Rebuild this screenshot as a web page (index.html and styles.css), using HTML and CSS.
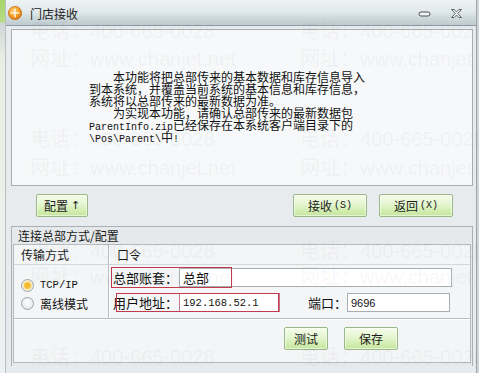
FILE: index.html
```html
<!DOCTYPE html>
<html lang="zh-CN">
<head>
<meta charset="utf-8">
<title>门店接收</title>
<link rel="stylesheet" href="styles.css">
</head>
<body>
<div class="screen">
  <div class="strip-left"></div>
  <div class="window">
    <div class="titlebar">
      <svg class="app-icon" width="16" height="16" viewBox="0 0 16 16">
        <defs>
          <radialGradient id="og" cx="40%" cy="35%" r="65%">
            <stop offset="0" stop-color="#ffd37a"/>
            <stop offset="0.6" stop-color="#f5a02a"/>
            <stop offset="1" stop-color="#d9780e"/>
          </radialGradient>
        </defs>
        <circle cx="8" cy="8" r="6.6" fill="url(#og)" stroke="#c96c10" stroke-width="0.8"/>
        <path d="M8 4.2v7.6M4.2 8h7.6" stroke="#fff4dc" stroke-width="1.6" stroke-linecap="round"/>
      </svg>
      <span class="title">门店接收</span>
      <div class="controls">
        <svg width="13" height="8" viewBox="0 0 13 8"><rect x="1" y="2" width="11" height="4" rx="2" fill="#f4f6f6" stroke="#4a5356" stroke-width="1"/></svg>
        <svg width="13" height="11" viewBox="0 0 13 11"><path d="M1.5 1.5h2.6l2.4 2.4 2.4-2.4h2.6l-3.7 4 3.7 4H8.9L6.5 7.1 4.1 9.5H1.5l3.7-4z" fill="#f4f6f6" stroke="#4a5356" stroke-width="0.9" stroke-linejoin="round"/></svg>
      </div>
    </div>
    <div class="body">
      <div class="info-panel">
        <div class="info-text">
          <div class="line indent">本功能将把总部传来的基本数据和库存信息导入</div>
          <div class="line">到本系统，并覆盖当前系统的基本信息和库存信息，</div>
          <div class="line">系统将以总部传来的最新数据为准。</div>
          <div class="line indent">为实现本功能，请确认总部传来的最新数据包</div>
          <div class="line"><span class="mono">ParentInfo.zip</span>已经保存在本系统客户端目录下的</div>
          <div class="line"><span class="mono">\Pos\Parent\</span>中<span class="mono">!</span></div>
        </div>
      </div>
      <div class="btn-row">
        <button class="btn btn-config">配置<span class="arrow">↑</span></button>
        <div class="spacer"></div>
        <button class="btn btn-wide">接收<span class="key">(S)</span></button>
        <button class="btn btn-wide">返回<span class="key">(X)</span></button>
      </div>
      <div class="group">
        <div class="group-title">连接总部方式/配置</div>
        <div class="group-inner">
          <div class="cfg-top">
            <div class="col-mode">
              <div class="col-head">传输方式</div>
              <div class="radios">
                <div class="radio-row"><span class="radio on"></span><span class="mono-lg">TCP/IP</span></div>
                <div class="radio-row"><span class="radio"></span><span>离线模式</span></div>
              </div>
            </div>
            <div class="col-pass">
              <div class="col-head head-pass">口令</div>
              <div class="fields">
                <div class="field-row">
                  <span class="label">总部账套：</span>
                  <div class="input input-full cjk">总部</div>
                  <span class="mark mark-1"></span>
                </div>
                <div class="field-row">
                  <span class="label">用户地址：</span>
                  <div class="input input-addr mono-in">192.168.52.1</div>
                  <span class="label label-port">端口：</span>
                  <div class="input input-port sans">9696</div>
                  <span class="mark mark-2"></span>
                </div>
              </div>
            </div>
          </div>
          <div class="cfg-actions">
            <button class="btn btn-test">测试</button>
            <button class="btn btn-save">保存</button>
          </div>
        </div>
      </div>
    </div>
  </div>
  <div class="strip-right"></div>
  <div class="watermark">
    <span class="wm" style="left:30px;top:20px">电话：400-665-0028</span>
    <span class="wm" style="left:300px;top:20px">电话：400-665-0028</span>
    <span class="wm" style="left:30px;top:48px">网址：www.chanjet.net</span>
    <span class="wm" style="left:300px;top:48px">网址：www.chanjet.net</span>
    <span class="wm" style="left:30px;top:128px">电话：400-665-0028</span>
    <span class="wm" style="left:300px;top:128px">电话：400-665-0028</span>
    <span class="wm" style="left:30px;top:157px">网址：www.chanjet.net</span>
    <span class="wm" style="left:300px;top:157px">网址：www.chanjet.net</span>
    <span class="wm" style="left:30px;top:240px">电话：400-665-0028</span>
    <span class="wm" style="left:300px;top:240px">电话：400-665-0028</span>
    <span class="wm" style="left:30px;top:266px">网址：www.chanjet.net</span>
    <span class="wm" style="left:300px;top:266px">网址：www.chanjet.net</span>
    <span class="wm" style="left:30px;top:346px">电话：400-665-0028</span>
    <span class="wm" style="left:300px;top:346px">电话：400-665-0028</span>
  </div>
</div>
</body>
</html>
```

FILE: styles.css
```css
* { box-sizing: border-box; }
html, body { margin: 0; padding: 0; }
body {
  width: 479px;
  height: 373px;
  overflow: hidden;
  background: #dfe3e5;
  font-family: "Noto Sans CJK SC", "Liberation Sans", sans-serif;
  font-size: 12px;
  color: #111;
}
.screen {
  position: relative;
  display: flex;
  width: 479px;
  height: 373px;
}
.strip-left {
  width: 6px;
  background: linear-gradient(#a5d466 0, #b9de86 22px, #cfd6d8 23px, #e9efe2 60px, #eef1f2 100%);
  border-right: 1px solid #b8c0c4;
}
.strip-right {
  width: 2px;
  background: #cfd6d9;
}
.window {
  flex: 1;
  display: flex;
  flex-direction: column;
  background: #e8ebed;
  border-right: 1px solid #9aa5aa;
}
.titlebar {
  height: 26px;
  display: flex;
  align-items: center;
  padding-left: 1px;
  background: linear-gradient(#eef3f4 0, #e2eaec 45%, #ccd7da 75%, #bfcbcf 100%);
  border-bottom: 1px solid #8e9ca1;
}
.app-icon { display: block; margin-top: 1px; }
.title {
  margin-left: 7px;
  font-size: 12px;
  color: #222;
  line-height: 14px;
  margin-top: 2px;
}
.controls {
  margin-left: auto;
  display: flex;
  align-items: center;
  gap: 19px;
  padding-right: 13px;
  margin-top: 2px;
}
.controls svg { display: block; }
.body {
  flex: 1;
  padding: 3px 3px 0 5px;
  display: flex;
  flex-direction: column;
}
.info-panel {
  height: 157px;
  border: 1px solid #a6aeb2;
  background: #f6f8f9;
  padding: 41px 0 0 77px;
}
.info-text { font-size: 12px; line-height: 12px; }
.line { white-space: nowrap; height: 12px; }
.line.indent { padding-left: 24px; }
.mono { font-family: "Liberation Mono", monospace; font-size: 10px; }
.btn-row {
  display: flex;
  margin-top: 8px;
  padding: 0 20px 0 25px;
  gap: 12px;
}
.spacer { flex: 1; }
.btn {
  height: 23px;
  border: 1px solid #98b887;
  border-radius: 2px;
  background: linear-gradient(#f6fdec 0, #e4f5cf 45%, #d2edb1 75%, #c4e69d 100%);
  box-shadow: inset 0 0 0 1px rgba(255,255,255,0.55);
  font-family: "Noto Sans CJK SC", "Liberation Sans", sans-serif;
  font-size: 12px;
  color: #1a1a1a;
  padding: 0;
  display: flex;
  align-items: center;
  justify-content: center;
  line-height: 14px;
}
.btn-config { width: 52px; }
.btn-config .arrow { margin-left: 3px; font-family: "DejaVu Sans", sans-serif; font-size: 11px; }
.btn-wide { width: 74px; }
.key { font-family: "Liberation Mono", monospace; font-size: 10px; margin-left: 2px; }
.group {
  margin-top: 9px;
  border: 1px solid #aab1b5;
  border-bottom: none;
  padding: 0 1px 3px 1px;
  background: #e6e9eb;
}
.group-title {
  height: 17px;
  padding-left: 5px;
  font-size: 12px;
  line-height: 17px;
  color: #1a1a1a;
}
.group-inner {
  border: 1px solid #b4bbbf;
  background: #f3f5f6;
  height: 119px;
  display: flex;
  flex-direction: column;
}
.cfg-top {
  display: flex;
  height: 74px;
  border-bottom: 1px solid #b8bfc3;
  box-shadow: 0 1px 0 #ffffff;
}
.col-mode {
  width: 95px;
  border-right: 1px solid #b8bfc3;
  box-shadow: 1px 0 0 #ffffff;
}
.col-pass { flex: 1; }
.col-head {
  height: 20px;
  border-bottom: 1px solid #d3d8db;
  padding-left: 7px;
  line-height: 20px;
  font-size: 12px;
  color: #1a1a1a;
}
.head-pass { padding-left: 8px; }
.radios { padding: 2px 0 0 7px; }
.radio-row {
  height: 18px;
  display: flex;
  align-items: center;
  gap: 6px;
}
.radio-row:first-child { margin-top: 9px; }
.radio {
  width: 13px;
  height: 13px;
  border-radius: 50%;
  border: 1px solid #9ea6aa;
  background: radial-gradient(circle at 50% 40%, #ffffff 0, #e6e9eb 70%, #cfd5d8 100%);
}
.radio.on {
  background: radial-gradient(circle, #f2b529 0, #f6c23c 3px, #fbe9b5 4px, #eef0f1 6px);
}
.mono-lg { font-family: "Liberation Mono", monospace; font-size: 10.5px; }
.fields { padding: 3px 0 0 4px; }
.field-row {
  position: relative;
  display: flex;
  align-items: center;
  height: 19px;
  margin-bottom: 6px;
}
.label {
  width: 66px;
  font-size: 13px;
  white-space: nowrap;
  color: #111;
  letter-spacing: 0;
}
.label-port { width: 39px; margin-left: 28px; }
.input {
  height: 19px;
  border: 1px solid #a7afb3;
  background: #ffffff;
  padding-left: 3px;
  display: flex;
  align-items: center;
  white-space: nowrap;
}
.input-full { width: 273px; font-size: 13px; }
.input-addr { width: 101px; border-color: #c27a86; }
.input-port { width: 103px; }
.mono-in { font-family: "Liberation Mono", monospace; font-size: 10.5px; }
.sans { font-family: "Liberation Sans", sans-serif; font-size: 11px; }
.mark {
  position: absolute;
  border: 1px solid #c23a4e;
  pointer-events: none;
}
.mark-1 { left: -2px; top: -1px; width: 121px; height: 21px; }
.mark-2 { left: 3px; top: 0; width: 163px; height: 19px; }
.cfg-actions {
  display: flex;
  justify-content: flex-end;
  gap: 16px;
  padding: 8px 72px 0 0;
}
.btn-test { width: 44px; }
.btn-save { width: 54px; }
.watermark {
  position: absolute;
  inset: 0;
  pointer-events: none;
  overflow: hidden;
}
.wm {
  position: absolute;
  font-family: "Liberation Sans", "Noto Sans CJK SC", sans-serif;
  font-size: 20px;
  line-height: 22px;
  color: rgba(40, 50, 60, 0.055);
  white-space: nowrap;
}
```
